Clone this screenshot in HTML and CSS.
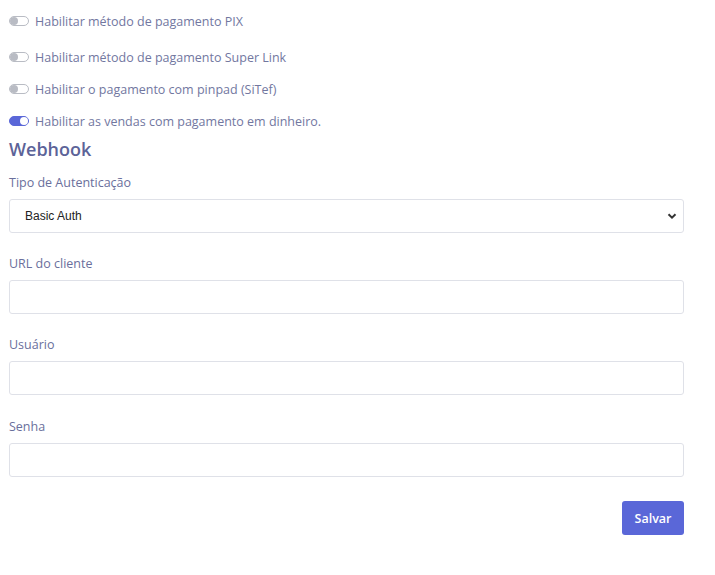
FILE: index.html
```html
<!DOCTYPE html>
<html lang="pt">
<head>
<meta charset="utf-8">
<link rel="stylesheet" href="styles.css">
</head>
<body>
<div class="page">
  <div class="switches">
    <label class="switch first"><span class="track"><span class="knob"></span></span><span class="switch-text">Habilitar método de pagamento PIX</span></label>
    <label class="switch"><span class="track"><span class="knob"></span></span><span class="switch-text">Habilitar método de pagamento Super Link</span></label>
    <label class="switch"><span class="track"><span class="knob"></span></span><span class="switch-text">Habilitar o pagamento com pinpad (SiTef)</span></label>
    <label class="switch on"><span class="track"><span class="knob"></span></span><span class="switch-text">Habilitar as vendas com pagamento em dinheiro.</span></label>
  </div>
  <h2 class="section-title">Webhook</h2>
  <div class="field">
    <div class="field-label">Tipo de Autenticação</div>
    <div class="select">
      <span class="select-value">Basic Auth</span>
      <svg class="chevron" width="10" height="8" viewBox="0 0 10 8"><path d="M1.5 2.2 L5 5.6 L8.5 2.2" fill="none" stroke="#333" stroke-width="2"/></svg>
    </div>
  </div>
  <div class="field">
    <div class="field-label">URL do cliente</div>
    <div class="input"></div>
  </div>
  <div class="field">
    <div class="field-label">Usuário</div>
    <div class="input"></div>
  </div>
  <div class="field field-last">
    <div class="field-label">Senha</div>
    <div class="input"></div>
  </div>
  <div class="actions">
    <button class="btn">Salvar</button>
  </div>
</div>
</body>
</html>
```
FILE: styles.css
```css
html, body { margin: 0; padding: 0; background: #fff; }
body { font-family: "Open Sans", "Noto Sans", sans-serif; color: #6a6f9c; }
.page { padding: 0 31px 0 9px; width: 675px; }
.switches { display: flex; flex-direction: column; padding-top: 13px; }
.switch { display: flex; align-items: center; gap: 6px; height: 16px; margin-bottom: 16px; font-size: 12.5px; color: #72779f; }
.switch.first { margin-bottom: 20px; }
.track { width: 18px; height: 8px; border: 1px solid #b9bcc4; border-radius: 6px; position: relative; flex: none; background: #fff; }
.knob { position: absolute; top: 0; left: 0; width: 8px; height: 8px; border-radius: 50%; background: #b9bcc4; }
.switch.on .track { background: #5a67d8; border-color: #5a67d8; }
.switch.on .knob { left: auto; right: 0; background: #fff; }
.section-title { margin: -8px 0 0; font-size: 18px; font-weight: 600; color: #5c6398; line-height: 24px; }
.field { margin-top: 13px; }
.field + .field { margin-top: 22px; }
.field + .field-last { margin-top: 23px; }
.field-label { font-size: 12.5px; line-height: 18px; color: #6a6f9c; margin-bottom: 7px; }
.select, .input { height: 32px; border: 1px solid #dfe1e8; border-radius: 3px; background: #fff; display: flex; align-items: center; }
.select { padding: 0 6px 0 15px; justify-content: space-between; }
.select-value { font-family: "Liberation Sans", Arial, sans-serif; font-size: 12px; color: #222; }
.actions { display: flex; justify-content: flex-end; margin-top: 24px; }
.btn { width: 62px; height: 34px; border: none; border-radius: 3px; background: #5a67d8; color: #fff; font-family: "Open Sans", sans-serif; font-size: 12.5px; font-weight: 600; }
```
